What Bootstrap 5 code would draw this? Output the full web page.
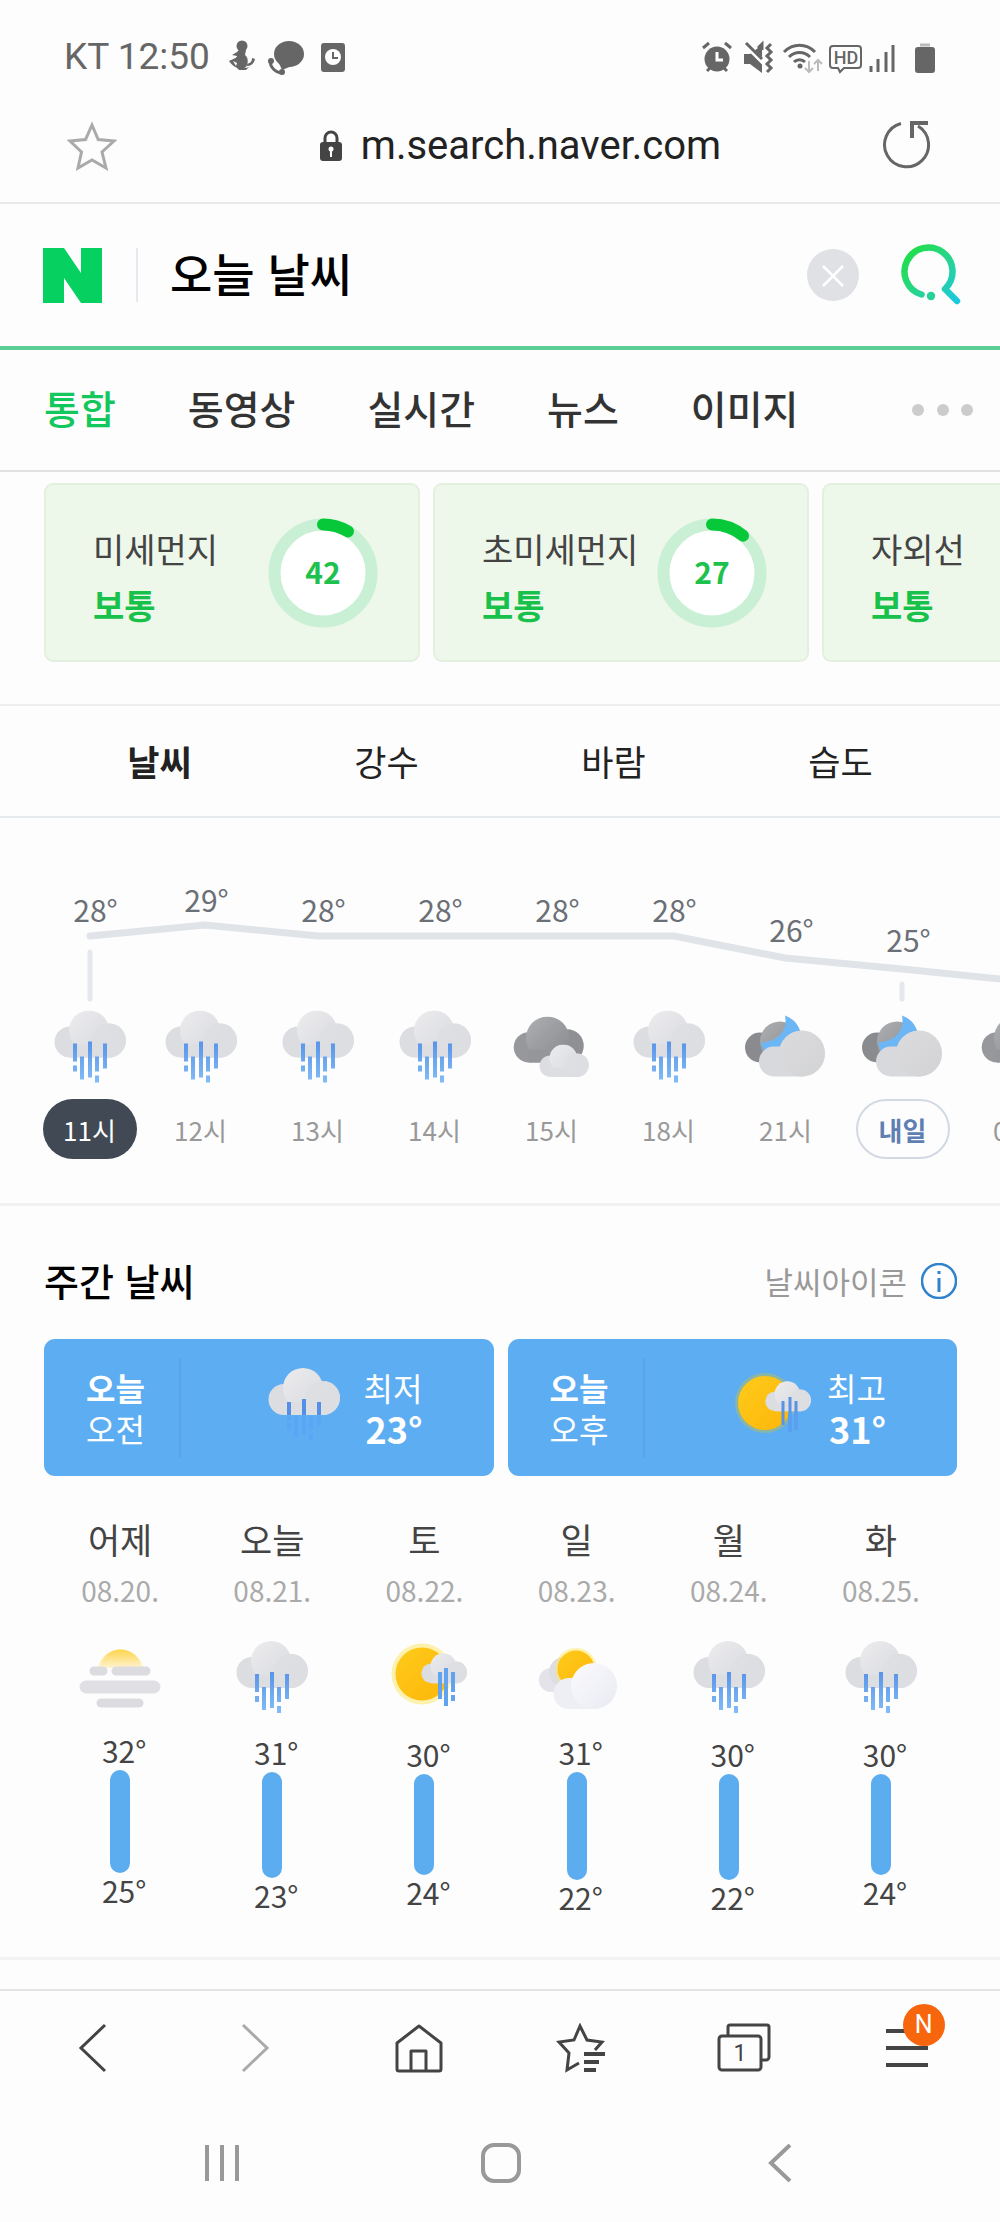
<!DOCTYPE html>
<html lang="ko">
<head>
<meta charset="utf-8">
<meta name="viewport" content="width=device-width, initial-scale=1">
<title>오늘 날씨</title>
<link href="https://cdn.jsdelivr.net/npm/bootstrap@5.3.0/dist/css/bootstrap.min.css" rel="stylesheet">
<style>
body{font-family:"Noto Sans CJK KR",sans-serif;background:#fdfdfd;color:#333;overflow-x:hidden}
svg{display:block;flex:none}
a{color:inherit;text-decoration:none}
button{background:none;border:0;padding:0;color:inherit}
.roboto{font-family:Roboto,sans-serif}
.side{padding-left:44px;padding-right:43px}
.statusbar{height:90px;padding:24px 64px 0;color:#666;font-size:37px}
.urlbar{height:114px;padding:0 67px;border-bottom:2px solid #e9e9e9}
.address{padding-left:40px}
.url{font-size:40px;color:#222}
.search{height:146px;padding:0 39px 0 43px;border-bottom:4px solid #5ccf96}
.search input{border:0;outline:0;background:none;min-width:0;padding:0 0 6px;font-size:46px;font-weight:500;color:#000;line-height:60px}
.rule{width:2px;height:54px;margin:0 32px 0 34px;background:#e8e8f0}
.tabs{height:122px;gap:72px;border-bottom:2px solid #dfe1e3;font-size:39px;line-height:58px;font-weight:500}
.tabs a{padding-bottom:6px}
.tabs .on{color:#12c75c}
.air{padding-top:11px;padding-bottom:42px;gap:13px;border-bottom:2px solid #eceef0;overflow:hidden}
.aircard{flex:0 0 376px;height:179px;border:2px solid #e3f0e0;border-radius:9px;background:#edf7ea;padding:0 40px 0 47px;color:#444;font-size:34px;line-height:56px}
.aircard>div{padding-top:9px}
.aircard b{display:block;font-weight:700;color:#18c14a}
.ring text{font-size:30px;font-weight:700;fill:#1cc24b}
.kinds{height:112px;padding:0 46px;border-bottom:2px solid #e6eaed;font-size:35px;color:#222}
.kinds a{flex:1;text-align:center}
.hours{overflow:hidden;border-bottom:3px solid #f0f1f3;padding:74px 0 44px 37px}
.hourcol{flex:0 0 117px}
.hourcol:first-child{flex-basis:105px}
.temparea{height:118px;padding-left:12px}
.deg{font-size:30px;line-height:34px}
.hours .deg{color:#6b6f76}
.line{left:0;top:0}
.pill{width:94px;height:60px;border-radius:30px;margin-top:15px;font-size:26px;color:#999;display:flex;align-items:center;justify-content:center}
.pill.now{background:#414954;color:#fff}
.pill.next{border:2px solid #d3d9e2;color:#5f7fb2;font-weight:700}
.week{padding-top:50px;padding-bottom:43px;border-bottom:3px solid #f0f2f3}
.week h2{font-size:38px;line-height:44px;font-weight:500;color:#000;margin:0}
.legend{font-size:31px;color:#999;gap:14px;line-height:44px;padding-top:3px}
.halves{gap:14px;margin-top:36px}
.half{flex:1;height:137px;border-radius:11px;background:#5dadf2;color:#fff;font-size:32px;line-height:41px;padding-right:71px}
.half svg{margin-bottom:6px}
.when{width:137px;height:100px;padding-left:42px;border-right:2px solid #57a4e8;display:flex;flex-direction:column;justify-content:center}
.when b,.peak b{font-weight:700}
.peak b{display:block;font-size:36px}
.days{margin-top:41px}
.days>div{flex:1 1 0}
.dow{font-size:35px;line-height:44px;color:#444}
.dom{font-size:28px;line-height:36px;margin-top:11px;margin-bottom:33px;color:#aaa}
.days .deg{padding-left:8px;color:#444}
.bar{width:20px;border-radius:10px;background:#5badef;margin-top:3px}
.toolbar{height:116px;padding:0 12px;margin-top:29px;border-top:2px solid #e4e4e4}
.toolbar>*{flex:1;display:flex;justify-content:center}
.sysnav{height:116px;padding:0 80px 0 82px}
.sysnav>*{flex:1;display:flex;justify-content:center}
.newmark{left:50%;top:-24px;width:42px;height:42px;margin-left:-4px;border-radius:50%;background:#f7650d;color:#fff;font-size:25px;line-height:42px;text-align:center}
</style>
<script src="https://cdn.jsdelivr.net/npm/bootstrap@5.3.0/dist/js/bootstrap.bundle.min.js"></script>
</head>
<body>
<svg width="0" height="0" class="position-absolute" aria-hidden="true">
<defs>
<linearGradient id="gc" x1="0" y1="0" x2="1" y2="1"><stop offset="0" stop-color="#ececee"/><stop offset="1" stop-color="#d9dadf"/></linearGradient>
<linearGradient id="gd" x1="0" y1="0" x2="1" y2="1"><stop offset="0" stop-color="#aeafb1"/><stop offset="1" stop-color="#898a8e"/></linearGradient>
<linearGradient id="gw" x1="0" y1="0" x2="1" y2="1"><stop offset="0" stop-color="#fbfbfd"/><stop offset="1" stop-color="#e9eaf2"/></linearGradient>
<linearGradient id="gs" x1="0" y1="0" x2="1" y2="1"><stop offset="0" stop-color="#fecb1a"/><stop offset="1" stop-color="#fdb60a"/></linearGradient>
<linearGradient id="gr" gradientUnits="userSpaceOnUse" x1="0" y1="30" x2="0" y2="73"><stop offset="0" stop-color="#5893e8"/><stop offset="1" stop-color="#83bdf8"/></linearGradient>
<linearGradient id="gq" x1="0" y1="0" x2="1" y2="1"><stop offset="0" stop-color="#1fe03e"/><stop offset=".5" stop-color="#27d58a"/><stop offset="1" stop-color="#1cc8e0"/></linearGradient>
<linearGradient id="gf" x1="0" y1="0" x2="0" y2="1"><stop offset="0" stop-color="#fdd54c"/><stop offset="1" stop-color="#fff3d0"/></linearGradient>
<symbol id="cloud" viewBox="0 0 72 48"><path d="M16 16h42v31H16A15.500 15.500 0 0 1 16 16z" fill="#dcdde1"/><circle cx="55" cy="30" r="17" fill="#dcdde1"/><circle cx="35" cy="20" r="20" fill="url(#gc)"/><path d="M16 34h38v13H16z" fill="#dddee2"/><circle cx="55" cy="30" r="17" fill="#dddee1" fill-opacity=".7"/></symbol>
<symbol id="dcloud" viewBox="0 0 72 48"><path d="M16 16h40v31H16A15.500 15.500 0 0 1 16 16z" fill="#97989b"/><circle cx="55" cy="30" r="17" fill="#8f9094"/><circle cx="35" cy="22" r="22" fill="url(#gd)"/><path d="M16 34h38v13H16z" fill="#95969a"/></symbol>
<symbol id="rain" viewBox="0 0 72 73"><use href="#cloud" width="72" height="48"/><path d="M21 33v18M21 55v6M28 46v23M36 31v36M43 46v15M43 65v7M51 33v25" stroke="url(#gr)" stroke-width="4" fill="none"/></symbol>
<symbol id="rainblue" viewBox="0 0 72 73"><use href="#cloud" width="72" height="48"/><path d="M21 34v13M36 31v16M51 34v13" stroke="#568fe8" stroke-width="4"/><path d="M21 48v4M21 55v6M28 48v21M36 48v19M43 48v13M43 65v7M51 48v10" stroke="#5aa6f6" stroke-width="4"/></symbol>
<symbol id="cloudy" viewBox="0 0 78 73"><use href="#dcloud" x="0" y="6" width="71" height="47"/><use href="#cloud" x="26" y="34" width="50" height="33"/></symbol>
<symbol id="night" viewBox="0 0 82 73"><circle cx="15" cy="37" r="15" fill="#8a8b8e"/><circle cx="35" cy="31" r="20" fill="url(#gd)"/><path d="M40 5c14 5 19 19 14 29S35 52 20 45L16 32c17-1 27-12 24-27z" fill="#6cb6f5"/><path d="M29 36h30v30H29a15 15 0 0 1 0-30z" fill="#d8d9dc"/><circle cx="57" cy="43" r="23" fill="url(#gc)"/><circle cx="57" cy="43" r="23" fill="#ccc" fill-opacity=".5"/></symbol>
<symbol id="sunrain" viewBox="-11 0 90 73"><circle cx="32" cy="33" r="30.500" fill="#ffe560" fill-opacity=".5"/><circle cx="32" cy="33" r="26.500" fill="url(#gs)"/><use href="#cloud" x="31" y="12" width="46" height="31"/><path d="M50 31v27M56 27v38M63 31v20M63 54v6" stroke="#62a3ef" stroke-width="4"/></symbol>
<symbol id="sunrainblue" viewBox="-2 0 80 73"><circle cx="32" cy="35" r="30" fill="#c2c04c" fill-opacity=".45"/><circle cx="32" cy="35" r="27" fill="url(#gs)"/><use href="#cloud" x="32" y="13" width="46" height="31"/><path d="M50 33v24M57 29v35M63 33v11" stroke="#5b92e6" stroke-width="3"/><path d="M57 44v20M63 44v18" stroke="#5b9ff0" stroke-width="4"/></symbol>
<symbol id="partsun" viewBox="0 0 82 73"><circle cx="15" cy="39" r="12" fill="#e3e3e9"/><circle cx="28" cy="31" r="15" fill="#dddde3"/><circle cx="40" cy="28" r="21" fill="#ffe560" fill-opacity=".5"/><circle cx="40" cy="28" r="18.500" fill="url(#gs)"/><path d="M33 37h28v31H33a15.500 15.500 0 0 1 0-31z" fill="#eeeff5"/><circle cx="58" cy="45" r="23" fill="url(#gw)"/></symbol>
<symbol id="fog" viewBox="0 0 82 73"><path d="M19 26a23 22 0 0 1 45 0z" fill="#fff1b0" fill-opacity=".7"/><path d="M21 27a20 18 0 0 1 41 0z" fill="url(#gf)"/><g stroke="#dcdce0" stroke-linecap="round"><path d="M15 30h9M37 30h30" stroke-width="9"/><path d="M7 46h68" stroke-width="13" stroke="#e0e0e4"/><path d="M22 62h38" stroke-width="9"/></g></symbol>
</defs>
</svg>

<header>
<div class="statusbar roboto d-flex align-items-center justify-content-between">
  <div class="d-flex align-items-center"><span>KT 12:50</span>
    <svg class="ms-3" width="120" height="40" viewBox="0 0 120 40" fill="#666"><circle cx="16" cy="9" r="5.500"/><path d="M13 13h7l-1 5c4 3 3 9 1 12-6 4-13 0-17-6 4-2 8-3 8-5L6 18l5-3zM21 29c5 0 7-3 8-7l-3-1c0 4-2 5-5 6zM9 29c3 3 12 3 15 0l-4 4h-7z"/><path d="M7 24l4 2-1 3z" fill="#fff"/><ellipse cx="63" cy="17" rx="15" ry="13"/><path d="M52 24l4 9 10-4z"/><path d="M44 23c0 8 6 13 13 13" fill="none" stroke="#666" stroke-width="3"/><circle cx="45" cy="24" r="3"/><circle cx="56" cy="35" r="3"/><rect x="95" y="6" width="24" height="29" rx="3"/><circle cx="107" cy="20" r="8" fill="#fff"/><path d="M107 15v6h5" fill="none" stroke="#666" stroke-width="2"/></svg>
  </div>
  <svg width="236" height="40" viewBox="0 0 236 40" fill="none" stroke="#666" stroke-width="3"><circle cx="17" cy="22" r="12.500" fill="#666" stroke="none"/><path d="M3 11l6-5M31 11l-6-5M7 34l4-4M27 34l-4-4"/><path d="M17 15v8h6" stroke="#fff"/><path d="M44 17h6l12-9v28l-12-9h-6z" fill="#666" stroke="none"/><path d="M44 6l22 22" stroke="#fff" stroke-width="5"/><path d="M46 6l16 16M58 11l4-4v6"/><path d="M71 7l-4 4 4 4-4 4 4 4-4 4 4 4-4 4"/><path d="M84 15c9-9 22-9 31 0M89 20c6-6 15-6 21 0M94 25c3-3 8-3 11 0"/><circle cx="100" cy="29" r="2.500" fill="#666" stroke="none"/><path d="M109 24v11m-4-4l4 4 4-4M118 34V23m-4 4l4-4 4 4" stroke="#bbb" stroke-width="2"/><path d="M133 9h25a3 3 0 0 1 3 3v16a3 3 0 0 1-3 3h-14l-4 4-2-4h-5a3 3 0 0 1-3-3V12a3 3 0 0 1 3-3z" stroke-width="2"/><text x="146" y="27" text-anchor="middle" font-size="18" font-weight="500" fill="#666" stroke="none">HD</text><path d="M171 35v-6M178 35V22M186 35V15M193 35V8"/><rect x="215" y="10" width="20" height="26" rx="3" fill="#666" stroke="none"/><path d="M220 8h10" stroke="#bbb"/></svg>
</div>
<div class="urlbar d-flex align-items-center justify-content-between">
  <button aria-label="즐겨찾기"><svg width="50" height="50" viewBox="0 0 50 50" fill="none" stroke="#aaa" stroke-width="3"><path d="M25 4l6.200 14.500L47 20 35 31l4 16-14-8-14 8 3.500-16L3 20l15.500-1.500z"/></svg></button>
  <div class="address d-flex align-items-center"><svg class="me-3" width="28" height="34" viewBox="0 0 28 34"><path d="M8 15V9a6 6 0 0 1 12 0v6" fill="none" stroke="#444" stroke-width="3"/><rect x="3" y="13" width="22" height="19" rx="3" fill="#444"/><circle cx="14" cy="20" r="2.500" fill="#fff"/><path d="M14 20v8" stroke="#fff" stroke-width="2"/></svg><span class="url roboto">m.search.naver.com</span></div>
  <button aria-label="새로고침"><svg width="52" height="50" viewBox="0 2 52 50" fill="none" stroke="#666" stroke-width="3"><path d="M20 4.500A22 22 0 1 0 37 7"/><path d="M31 19V4h16" stroke-width="4"/></svg></button>
</div>
</header>

<form class="search d-flex align-items-center" onsubmit="return false">
  <a href="#" aria-label="NAVER"><svg width="59" height="55" viewBox="0 0 59 55" fill="#05d060"><path d="M0 0h21l17 25V0h21v55H38L21 30v25H0z"/></svg></a>
  <span class="rule"></span>
  <input class="flex-grow-1" type="text" value="오늘 날씨" aria-label="검색어">
  <button type="button" aria-label="지우기"><svg width="52" height="52" viewBox="0 0 52 52"><circle cx="26" cy="26" r="26" fill="#e0e1e5"/><path d="M16 17l20 20M36 17L16 37" stroke="#fff" stroke-width="2.500"/></svg></button>
  <button class="ms-5" aria-label="검색"><svg width="54" height="62" viewBox="6 0 54 62" fill="none" stroke="url(#gq)" stroke-width="6.500" stroke-linecap="round" stroke-linejoin="round" overflow="visible"><path d="M20.500 50.500A24 24 0 1 1 44 45L56 57"/><circle cx="30" cy="52" r="4.200" fill="#25d29a" stroke="none"/></svg></button>
</form>

<nav class="tabs side d-flex align-items-center">
  <a class="on" href="#">통합</a><a href="#">동영상</a><a href="#">실시간</a><a href="#">뉴스</a><a href="#">이미지</a>
  <button class="ms-auto" aria-label="더보기"><svg width="62" height="12" viewBox="0 0 62 12" fill="#ccc" overflow="visible"><circle cx="23" cy="6" r="6"/><circle cx="48" cy="6" r="6"/><circle cx="72" cy="6" r="6"/></svg></button>
</nav>

<main>
<section class="air side d-flex">
  <div class="aircard d-flex align-items-center justify-content-between"><div>미세먼지<b>보통</b></div>
    <svg class="ring" width="110" height="110" viewBox="0 0 110 110"><circle cx="55" cy="55" r="48.500" fill="#fff" stroke="#c9f0d5" stroke-width="12"/><path d="M55 6.500A48.500 48.500 0 0 1 80 13.400" fill="none" stroke="#06c839" stroke-width="12" stroke-linecap="round"/><text x="55" y="66" text-anchor="middle">42</text></svg></div>
  <div class="aircard d-flex align-items-center justify-content-between"><div>초미세먼지<b>보통</b></div>
    <svg class="ring" width="110" height="110" viewBox="0 0 110 110"><circle cx="55" cy="55" r="48.500" fill="#fff" stroke="#c9f0d5" stroke-width="12"/><path d="M55 6.500A48.500 48.500 0 0 1 86 17.700" fill="none" stroke="#06c839" stroke-width="12" stroke-linecap="round"/><text x="55" y="66" text-anchor="middle">27</text></svg></div>
  <div class="aircard d-flex align-items-center"><div>자외선<b>보통</b></div></div>
</section>

<nav class="kinds d-flex align-items-center"><a class="fw-bold" href="#">날씨</a><a href="#">강수</a><a href="#">바람</a><a href="#">습도</a></nav>

<section class="hours position-relative">
  <svg class="line position-absolute" width="1100" height="192" viewBox="0 0 1100 192" fill="none" stroke="#e0e4e8" stroke-linecap="round" stroke-linejoin="round"><path d="M90 118L205 107L318 118H674L785 140L902 151L1020 163" stroke-width="7"/><path d="M90 134v47M902 166v15" stroke="#e5e7ee" stroke-width="5"/></svg>
  <div class="d-flex">
    <div class="hourcol d-flex flex-column align-items-center"><div class="temparea deg">28°</div><svg width="72" height="74"><use href="#rain"/></svg><span class="pill now">11시</span></div>
    <div class="hourcol d-flex flex-column align-items-center"><div class="temparea deg" style="margin-top:-10px;margin-bottom:10px">29°</div><svg width="72" height="74"><use href="#rain"/></svg><span class="pill">12시</span></div>
    <div class="hourcol d-flex flex-column align-items-center"><div class="temparea deg">28°</div><svg width="72" height="74"><use href="#rain"/></svg><span class="pill">13시</span></div>
    <div class="hourcol d-flex flex-column align-items-center"><div class="temparea deg">28°</div><svg width="72" height="74"><use href="#rain"/></svg><span class="pill">14시</span></div>
    <div class="hourcol d-flex flex-column align-items-center"><div class="temparea deg">28°</div><svg width="78" height="74"><use href="#cloudy"/></svg><span class="pill">15시</span></div>
    <div class="hourcol d-flex flex-column align-items-center"><div class="temparea deg">28°</div><svg width="72" height="74"><use href="#rain"/></svg><span class="pill">18시</span></div>
    <div class="hourcol d-flex flex-column align-items-center"><div class="temparea deg" style="margin-top:20px;margin-bottom:-20px">26°</div><svg width="82" height="74"><use href="#night"/></svg><span class="pill">21시</span></div>
    <div class="hourcol d-flex flex-column align-items-center"><div class="temparea deg" style="margin-top:30px;margin-bottom:-30px">25°</div><svg width="82" height="74"><use href="#night"/></svg><span class="pill next">내일</span></div>
    <div class="hourcol d-flex flex-column align-items-center"><div class="temparea deg"></div><svg width="78" height="74"><use href="#cloudy"/></svg><span class="pill">03시</span></div>
  </div>
</section>

<section class="week side">
  <div class="d-flex justify-content-between align-items-center"><h2>주간 날씨</h2>
    <a class="legend d-flex align-items-center" href="#">날씨아이콘<svg width="36" height="36" viewBox="1 1 36 36" fill="none" stroke="#2f82cb"><circle cx="19" cy="19" r="17" stroke-width="2.500"/><path d="M19 16v14M19 9v3" stroke-width="3"/></svg></a></div>
  <div class="halves d-flex">
    <div class="half d-flex align-items-center"><div class="when"><b>오늘</b><span>오전</span></div><svg class="ms-auto me-4" width="72" height="73"><use href="#rainblue"/></svg><div class="peak text-end">최저<b>23°</b></div></div>
    <div class="half d-flex align-items-center"><div class="when"><b>오늘</b><span>오후</span></div><svg class="ms-auto me-3" width="80" height="73"><use href="#sunrainblue"/></svg><div class="peak text-end">최고<b>31°</b></div></div>
  </div>
  <div class="days d-flex">
    <div class="d-flex flex-column align-items-center"><div class="dow">어제</div><div class="dom">08.20.</div><svg width="82" height="73"><use href="#fog"/></svg><div class="deg" style="margin-top:19px">32°</div><div class="bar" style="height:103px"></div><div class="deg">25°</div></div>
    <div class="d-flex flex-column align-items-center"><div class="dow">오늘</div><div class="dom">08.21.</div><svg width="72" height="73"><use href="#rain"/></svg><div class="deg" style="margin-top:21px">31°</div><div class="bar" style="height:106px"></div><div class="deg">23°</div></div>
    <div class="d-flex flex-column align-items-center"><div class="dow">토</div><div class="dom">08.22.</div><svg width="90" height="73"><use href="#sunrain"/></svg><div class="deg" style="margin-top:23px">30°</div><div class="bar" style="height:101px"></div><div class="deg">24°</div></div>
    <div class="d-flex flex-column align-items-center"><div class="dow">일</div><div class="dom">08.23.</div><svg width="82" height="73"><use href="#partsun"/></svg><div class="deg" style="margin-top:21px">31°</div><div class="bar" style="height:108px"></div><div class="deg">22°</div></div>
    <div class="d-flex flex-column align-items-center"><div class="dow">월</div><div class="dom">08.24.</div><svg width="72" height="73"><use href="#rain"/></svg><div class="deg" style="margin-top:23px">30°</div><div class="bar" style="height:106px"></div><div class="deg">22°</div></div>
    <div class="d-flex flex-column align-items-center"><div class="dow">화</div><div class="dom">08.25.</div><svg width="72" height="73"><use href="#rain"/></svg><div class="deg" style="margin-top:23px">30°</div><div class="bar" style="height:101px"></div><div class="deg">24°</div></div>
  </div>
</section>
</main>

<footer>
<div class="toolbar d-flex align-items-center">
  <button aria-label="뒤로"><svg width="50" height="50" viewBox="0 0 50 50" fill="none" stroke="#444" stroke-width="3"><path d="M37 2L13 25l24 23"/></svg></button>
  <button aria-label="앞으로"><svg width="50" height="50" viewBox="0 0 50 50" fill="none" stroke="#aaa" stroke-width="3"><path d="M12 2l24 23-24 23"/></svg></button>
  <button aria-label="홈"><svg width="50" height="50" viewBox="0 0 50 50" fill="none" stroke="#444" stroke-width="3"><path d="M3 20L25 3l22 17v26a2 2 0 0 1-2 2H5a2 2 0 0 1-2-2zM17 48V28h15v20" stroke-linejoin="round"/></svg></button>
  <button aria-label="북마크"><svg width="50" height="50" viewBox="0 0 50 50" fill="none" stroke="#444" stroke-width="3"><path d="M39 27l7-8-15-2L24 3l-6 14-15 2 10 11-2 17 12-7"/><path d="M28 31h21M28 39h15M28 47h12" stroke-width="4"/></svg></button>
  <button aria-label="탭"><svg width="54" height="50" viewBox="0 0 54 50" fill="none" stroke="#444" stroke-width="3"><rect x="2" y="13" width="42" height="34" rx="3"/><path d="M11 12V4a2 2 0 0 1 2-2h37a2 2 0 0 1 2 2v30a3 3 0 0 1-3 3h-4"/><text class="roboto" x="23" y="38" text-anchor="middle" font-size="23" fill="#444" stroke="none">1</text></svg></button>
  <button class="position-relative" aria-label="메뉴"><svg width="42" height="40" viewBox="0 0 42 40" stroke="#444" stroke-width="4"><path d="M0 3h42M0 20h42M0 37h42"/></svg><span class="newmark roboto position-absolute">N</span></button>
</div>
<div class="sysnav d-flex align-items-center">
  <button aria-label="최근 앱"><svg width="36" height="38" viewBox="0 0 36 38" stroke="#999" stroke-width="4"><path d="M3 1v36M18 1v36M33 1v36"/></svg></button>
  <button aria-label="홈 화면"><svg width="40" height="40" viewBox="0 0 40 40"><rect x="2" y="2" width="36" height="36" rx="11" fill="none" stroke="#999" stroke-width="4"/></svg></button>
  <button aria-label="이전"><svg width="24" height="38" viewBox="0 0 24 38" fill="none" stroke="#999" stroke-width="4"><path d="M22 1L3 19l19 18"/></svg></button>
</div>
</footer>
</body>
</html>
